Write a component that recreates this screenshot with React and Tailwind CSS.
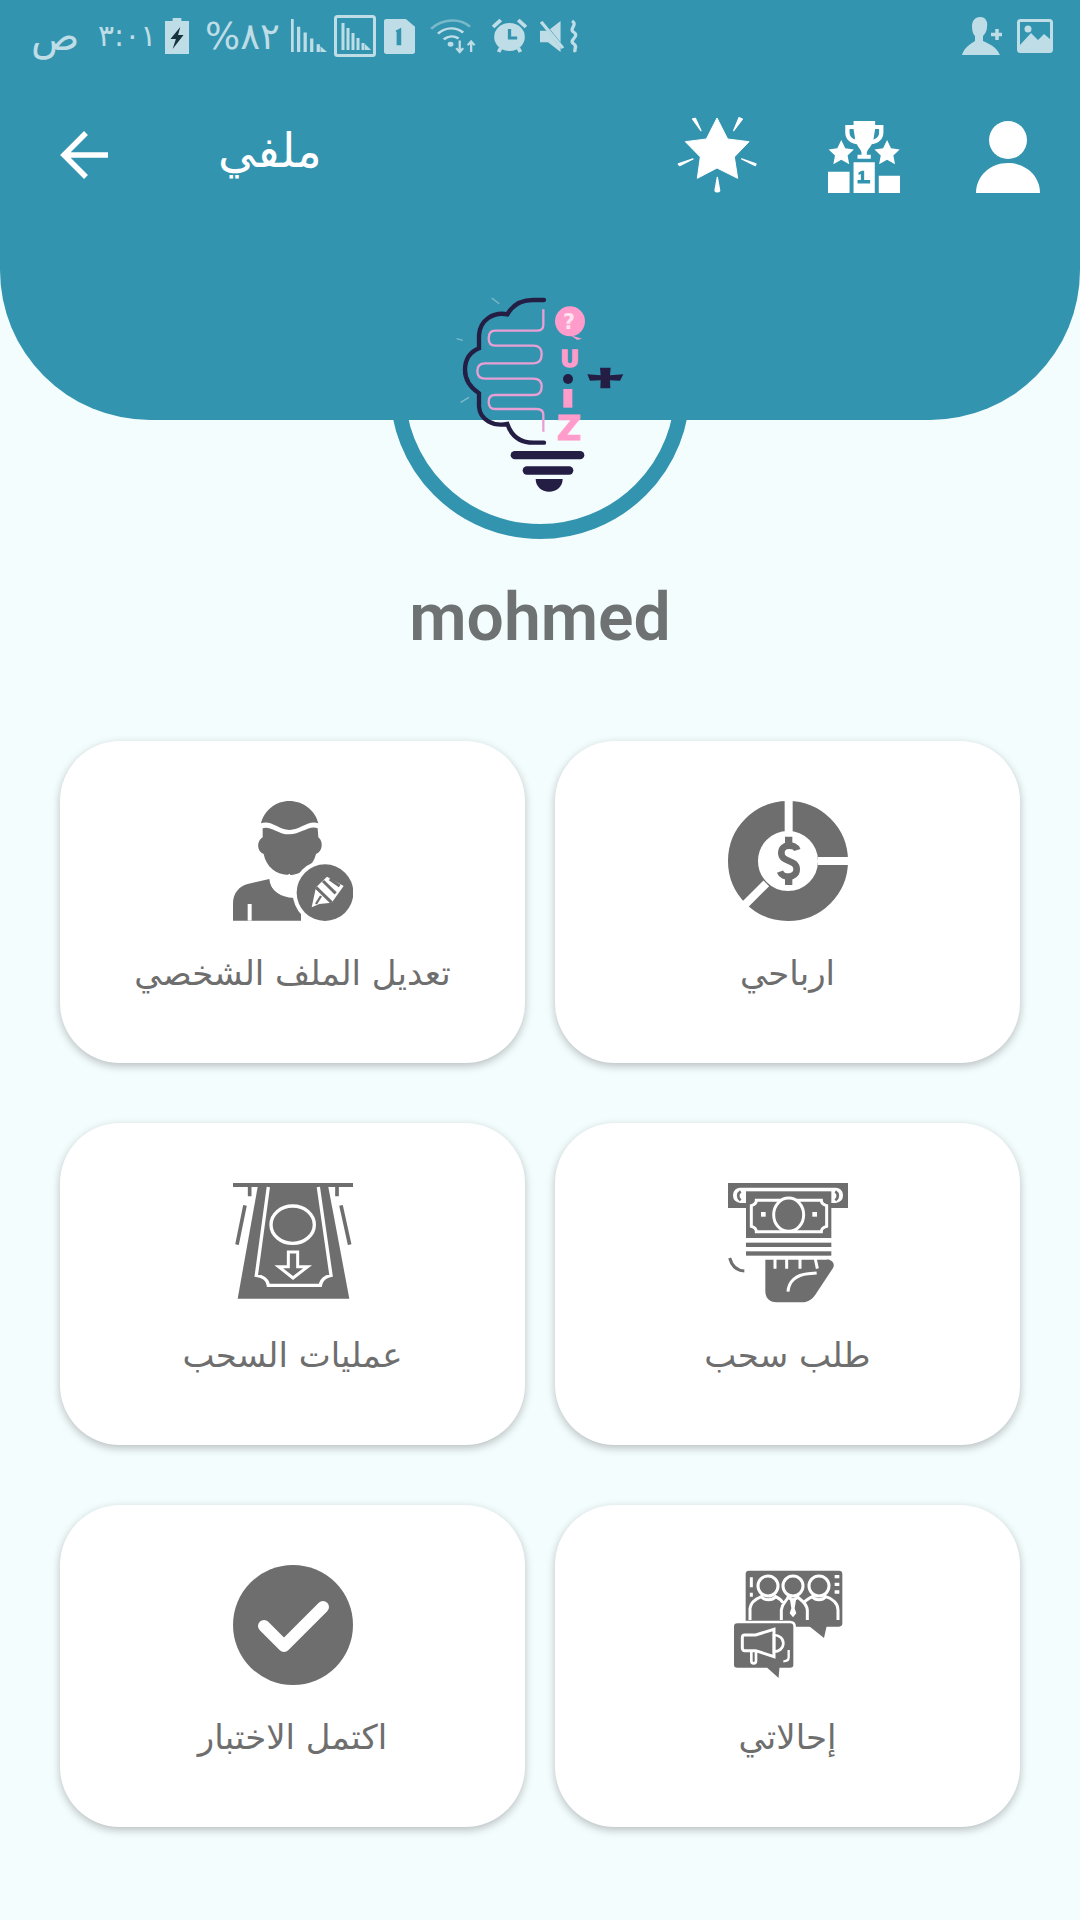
import React from 'react';

const GRAY = '#6e6e6e';

const EarningsIcon = () => (
    <svg width="120" height="120" viewBox="80 63 360 360">
        <circle cx="260" cy="243" r="135" fill="none" stroke={GRAY} strokeWidth="90" />
        <path d="M262 50V160M350 243H450M195 310L125 380" stroke="#fff" strokeWidth="24" />
        <path d="M288 210C282 192 240 190 240 218C240 250 286 236 286 268C286 296 244 296 236 275" fill="none" stroke={GRAY} strokeWidth="20" />
        <path d="M262 170V200M262 285V315" stroke={GRAY} strokeWidth="22" />
    </svg>
);

const EditProfileIcon = () => (
    <svg width="120" height="120" viewBox="96 63 360 360">
        <path d="M180 130C190 90 225 63 265 63C305 63 343 90 352 130C325 118 300 148 265 150C232 148 208 118 180 130Z" fill={GRAY} />
        <path d="M185 145C205 135 235 165 265 163C300 163 325 135 350 145L352 172C368 185 365 215 345 222C335 265 295 285 265 285C225 285 195 260 188 222C168 215 165 185 185 172Z" fill={GRAY} />
        <path d="M96 422V370C96 340 115 318 140 312L205 297C208 330 235 352 285 350L330 422Z" fill={GRAY} />
        <path d="M222 285C225 300 245 298 268 285M212 300C212 325 235 348 280 350" fill="none" stroke="#fff" strokeWidth="8" />
        <path d="M146 422V372" stroke="#fff" strokeWidth="12" />
        <rect x="300" y="400" width="40" height="30" fill="#fff" />
        <circle cx="372" cy="338" r="97" fill="#fff" />
        <circle cx="372" cy="338" r="85" fill={GRAY} />
        <path d="M345 322L378 290L428 318L392 368L355 372L332 382Z" fill="#fff" />
        <path d="M345 322L392 368M366 303L404 340M386 297L416 318" fill="none" stroke={GRAY} strokeWidth="9" />
        <path d="M345 372L360 348" fill="none" stroke={GRAY} strokeWidth="7" />
    </svg>
);

const RequestIcon = () => (
    <svg width="120" height="120" viewBox="50 40 360 360">
        <rect x="50" y="40" width="360" height="75" fill={GRAY} />
        <rect x="65" y="54" width="330" height="46" rx="22" fill="#fff" />
        <path d="M88 65C78 72 78 84 88 92M372 65C382 72 382 84 372 92" fill="none" stroke={GRAY} strokeWidth="8" />
        <rect x="104" y="65" width="256" height="140" fill={GRAY} />
        <path d="M135 92H330C330 100 338 106 346 108V170C338 172 330 178 330 186H135C135 178 127 172 120 170V108C127 106 135 100 135 92Z" fill="none" stroke="#fff" strokeWidth="9" />
        <ellipse cx="232" cy="135" rx="45" ry="50" fill={GRAY} stroke="#fff" strokeWidth="9" />
        <rect x="149" y="127" width="14" height="14" fill="#fff" />
        <rect x="303" y="127" width="14" height="14" fill="#fff" />
        <rect x="104" y="219" width="256" height="13" fill={GRAY} />
        <rect x="104" y="245" width="256" height="13" fill={GRAY} />
        <path d="M162 270H345C360 268 373 282 365 295L312 375C298 395 285 398 265 398H195C175 398 162 385 162 365Z" fill={GRAY} />
        <path d="M191 268V297M226 268V297M266 268V297M312 268L318 297" stroke="#fff" strokeWidth="9" />
        <path d="M230 366C232 335 255 315 290 312L316 310" fill="none" stroke="#fff" strokeWidth="9" />
        <path d="M55 265C62 290 75 303 99 304" fill="none" stroke={GRAY} strokeWidth="9" />
    </svg>
);

const WithdrawalsIcon = () => (
    <svg width="120" height="120" viewBox="66 45 360 360">
        <rect x="66" y="45" width="360" height="12" fill={GRAY} />
        <path d="M140 57H352L415 392H80Z" fill={GRAY} />
        <path d="M172 57L136 322C155 324 170 335 172 352H328C330 335 345 324 360 322L322 57" fill="none" stroke="#fff" strokeWidth="10" />
        <ellipse cx="245" cy="170" rx="65" ry="56" fill="none" stroke="#fff" strokeWidth="10" />
        <path d="M232 252H260V296H290L246 330L203 296H232Z" fill="none" stroke="#fff" strokeWidth="9" />
        <path d="M116 57V85M378 57V85M102 112L78 230M390 112L416 230" stroke={GRAY} strokeWidth="11" />
    </svg>
);

const ReferralsIcon = () => (
    <svg width="120" height="120" viewBox="52 45 360 360">
        <rect x="105" y="62" width="290" height="168" rx="10" fill={GRAY} />
        <path d="M295 228H348L340 264Z" fill={GRAY} />
        <path d="M122 82V112M122 128V140" stroke="#fff" strokeWidth="9" />
        <path d="M372 80H386M372 103H386M372 126H386" stroke="#fff" strokeWidth="10" />
        <circle cx="172" cy="108" r="30" fill="none" stroke="#fff" strokeWidth="9" />
        <circle cx="247" cy="108" r="30" fill="none" stroke="#fff" strokeWidth="9" />
        <circle cx="325" cy="108" r="30" fill="none" stroke="#fff" strokeWidth="9" />
        <path d="M118 210V175C120 155 140 145 152 140C160 152 185 152 195 140C205 145 212 150 216 158M212 210V180C215 158 230 150 232 142L247 150L262 142C270 150 288 158 290 180V210M280 158C285 150 295 145 305 140C315 152 335 152 345 140C365 145 382 160 382 180V210" fill="none" stroke="#fff" strokeWidth="9" />
        <path d="M238 150L256 150L252 175L257 190L247 202L237 190L242 175Z" fill="#fff" />
        <path d="M80 216H238C247 216 252 222 252 230V345C252 352 247 357 238 357H210L207 392L168 357H80C72 357 66 352 66 345V230C66 222 72 216 80 216Z" fill={GRAY} stroke="#fff" strokeWidth="8" />
        <path d="M95 262C95 258 98 255 102 255H135L190 238V320L135 302H102C98 302 95 298 95 295Z" fill={GRAY} stroke="#fff" strokeWidth="9" />
        <path d="M190 255V305C205 305 218 295 218 280C218 265 205 255 190 255Z" fill="none" stroke="#fff" strokeWidth="8" />
        <path d="M122 302V332C122 343 136 343 136 332V304" fill="none" stroke="#fff" strokeWidth="8" />
        <path d="M234 300V322C234 330 228 334 218 334" fill="none" stroke="#fff" strokeWidth="7" />
    </svg>
);

const CompletedIcon = () => (
    <svg width="120" height="120" viewBox="0 0 120 120">
        <circle cx="60" cy="60" r="60" fill={GRAY} />
        <path d="M31 61L51 81L90 42" fill="none" stroke="#fff" strokeWidth="12" strokeLinecap="round" strokeLinejoin="round" />
    </svg>
);

const cards = [
    { label: 'تعديل الملف الشخصي', Icon: EditProfileIcon },
    { label: 'ارباحي', Icon: EarningsIcon },
    { label: 'عمليات السحب', Icon: WithdrawalsIcon },
    { label: 'طلب سحب', Icon: RequestIcon },
    { label: 'اكتمل الاختبار', Icon: CompletedIcon },
    { label: 'إحالاتي', Icon: ReferralsIcon },
];

const StatusBar = () => (
    <div className="flex h-[75px] items-center justify-between pl-[31px] pr-[27px] pb-[3px] text-[#bedde6]">
        <div className="flex items-center">
            <span className="w-[46px] whitespace-nowrap text-[40px] font-extralight leading-none">ص</span>
            <span className="ml-[21px] w-[53px] whitespace-nowrap text-[30px] leading-none">٣:٠١</span>
            <svg className="ml-[14px]" width="24" height="36" viewBox="0 0 22 36" preserveAspectRatio="none">
                <path d="M7 0H15V3H22V36H0V3H7Z" fill="currentColor" />
                <path d="M14 9L5 21H10L7 31L17 17H12Z" fill="#16323d" />
            </svg>
            <span className="ml-[16px] w-[71px] whitespace-nowrap text-[37px] leading-none">%٨٢</span>
            <svg className="ml-[15px]" width="36" height="35" viewBox="0 0 33 36" preserveAspectRatio="none">
                <path d="M1 0V34M7 8V34M13 14V34M19 20V34M25 26V34" stroke="currentColor" strokeWidth="3" />
                <path d="M27 34L33 34L27 28Z" fill="currentColor" />
            </svg>
            <svg className="ml-[7px]" width="42" height="42" viewBox="0 0 42 42">
                <rect x="1.5" y="1.5" width="39" height="39" rx="2" fill="none" stroke="currentColor" strokeWidth="3" />
                <path d="M9 8V35M14 13V35M19 18V35M24 23V35M29 28V35" stroke="currentColor" strokeWidth="3" />
                <path d="M31 35H37L31 29Z" fill="currentColor" />
            </svg>
            <svg className="ml-[8px]" width="31" height="35" viewBox="0 0 27 36" preserveAspectRatio="none">
                <path d="M2 0H19L27 8V34C27 35 26 36 25 36H2C1 36 0 35 0 34V2C0 1 1 0 2 0Z" fill="currentColor" />
                <path d="M10 12L15 9V27H11V14Z" fill="#3394af" />
            </svg>
            <svg className="ml-[15px]" width="48" height="35" viewBox="0 0 42 36" preserveAspectRatio="none">
                <path d="M1 10C11 -1 27 -1 35 8" fill="none" stroke="currentColor" strokeWidth="2.5" opacity="0.5" />
                <path d="M7 15C14 8 23 8 29 14M12 21C16 17 21 17 25 20" fill="none" stroke="currentColor" strokeWidth="2.5" />
                <circle cx="18" cy="26" r="2.5" fill="currentColor" />
                <path d="M26 22V34M23 30L26 34L29 30M36 34V24M33 27L36 23L39 27" fill="none" stroke="currentColor" strokeWidth="2" />
            </svg>
            <svg className="ml-[14px]" width="35" height="36" viewBox="0 0 32 36" preserveAspectRatio="none">
                <circle cx="16" cy="19" r="14" fill="currentColor" />
                <path d="M1 9L8 2M31 9L24 2M6 34L8 30M26 34L24 30" stroke="currentColor" strokeWidth="3.5" />
                <path d="M16 11V20H23" fill="none" stroke="#3394af" strokeWidth="3" />
            </svg>
            <svg className="ml-[13px]" width="40" height="35" viewBox="0 0 35 36" preserveAspectRatio="none">
                <path d="M0 12H7L18 2V34L7 24H0Z" fill="currentColor" />
                <path d="M3 5L21 31" stroke="#3394af" strokeWidth="3" />
                <path d="M1 3L20 30" stroke="currentColor" strokeWidth="3" />
                <path d="M28 2C34 6 24 10 30 14C35 18 24 22 30 26C33 29 29 31 31 34" fill="none" stroke="currentColor" strokeWidth="3" />
            </svg>
        </div>
        <div className="flex items-center gap-[15px]">
            <svg width="40" height="38" viewBox="0 0 40 38">
                <path d="M18 0C24 0 26 5 25 10C25 14 23 17 21 19V24C27 27 34 29 38 38H0C2 31 8 27 13 24V19C11 17 10 14 10 9C10 4 13 0 18 0Z" fill="currentColor" />
                <path d="M35 12V23M29 17.5H40" stroke="currentColor" strokeWidth="3.5" />
            </svg>
            <svg width="36" height="34" viewBox="0 0 36 34">
                <rect x="1.5" y="1.5" width="33" height="31" rx="2" fill="none" stroke="currentColor" strokeWidth="3" />
                <path d="M3 26L14 14L21 21L27 15L33 20V32H3Z" fill="currentColor" />
                <circle cx="11" cy="10" r="3.5" fill="currentColor" />
            </svg>
        </div>
    </div>
);

const Toolbar = () => (
    <div className="mt-[42px] flex items-center pl-[60px] pr-[40px]">
        <svg width="48" height="48" viewBox="0 0 48 48">
            <path d="M26 2L4 24L26 46M4 24H48" fill="none" stroke="#fff" strokeWidth="5.5" />
        </svg>
        <h1 className="mb-[10px] ml-[110px] text-[47px] font-normal leading-none text-white">ملفي</h1>
        <div className="ml-auto flex items-end">
            <svg width="80" height="76" viewBox="110 354 240 228">
                <path d="M230 357L262 420L326 428L282 474L292 538L230 507L171 538L180 474L135 428L198 420Z" fill="#fff" stroke="#fff" strokeWidth="3" strokeLinejoin="round" />
                <path d="M157 360L182 395L165 358ZM306 360L280 395L296 356ZM114 495L158 480L118 500ZM347 495L304 480L345 500ZM231 535L224 575C226 580 236 580 238 575Z" fill="#fff" stroke="#fff" strokeWidth="4" strokeLinejoin="round" />
            </svg>
            <svg className="ml-[71px]" width="72" height="72" viewBox="563 360 217 217">
                <path d="M640 360H705V372H730V395C730 415 715 428 695 430C690 440 682 445 680 455V462H692V474H652V462H664V455C662 445 654 440 650 430C630 428 615 415 615 395V372H640ZM628 384V395C628 405 635 414 645 416L640 384ZM717 384H705L700 416C710 414 717 405 717 395Z" fill="#fff" />
                <path d="M603 417L615 442L641 446L622 464L627 490L603 477L579 490L584 464L565 446L591 442ZM741 417L753 442L779 446L760 464L765 490L741 477L717 490L722 464L703 446L729 442Z" fill="#fff" />
                <path d="M563 513H628V577H563ZM716 525H780V577H716Z" fill="#fff" />
                <path fillRule="evenodd" d="M640 484H704V577H640ZM655 515L665 510H672V538H690V548H652V538H662V520L655 523Z" fill="#fff" />
            </svg>
            <svg className="ml-[76px]" width="64" height="72" viewBox="0 0 64 72">
                <circle cx="32" cy="19" r="19" fill="#fff" />
                <path d="M0 72C0 55 14 42 32 42C50 42 64 55 64 72Z" fill="#fff" />
            </svg>
        </div>
    </div>
);

const Logo = () => (
    <svg className="absolute left-[-35px] top-[16px] z-20" width="340" height="280" viewBox="0 0 1020 840">
        <path d="M522 90H490C450 90 425 110 412 133C370 125 330 150 327 195V235C290 250 285 280 285 300C285 330 305 355 327 370V410C330 450 370 470 412 462C425 500 450 518 490 518H522" fill="none" stroke="#241e45" strokeWidth="13" strokeLinecap="round" />
        <path d="M520 118V165Q520 182 500 182H375Q356 182 356 205Q356 227 375 227H490Q515 227 515 252Q515 280 490 280H345Q322 280 322 303Q322 326 345 326H490Q515 326 515 350Q515 375 490 375H375Q356 375 356 395Q356 417 375 417H500Q520 417 520 435V485" fill="none" stroke="#e8a0d4" strokeWidth="7" />
        <path d="M365 84L388 101M260 206L278 211M272 397L297 382" stroke="#7fb9cb" strokeWidth="4" />
        <circle cx="600" cy="154" r="45" fill="#ff9ccb" />
        <path d="M600 195L636 206L622 210Z" fill="#ff9ccb" />
        <text x="597" y="176" textAnchor="middle" fontSize="62" fontWeight="700" fill="#ffe3f0" fontFamily="DejaVu Sans, sans-serif">?</text>
        <text x="599" y="290" textAnchor="middle" fontSize="70" fontWeight="700" fill="#ff9ccb" stroke="#ff9ccb" strokeWidth="4" fontFamily="DejaVu Sans, sans-serif">U</text>
        <circle cx="594" cy="327" r="15" fill="#241e45" />
        <rect x="580" y="357" width="27" height="56" fill="#ff9ccb" />
        <text x="597" y="511" textAnchor="middle" fontSize="102" fontWeight="700" fill="#ff9ccb" stroke="#ff9ccb" strokeWidth="3" fontFamily="DejaVu Sans, sans-serif">Z</text>
        <path d="M652 313L692 316L690 293H722L720 316L760 313L750 332L720 331L721 355H691L692 331L660 332Z" fill="#241e45" />
        <rect x="422" y="543" width="221" height="25" rx="12.5" fill="#241e45" />
        <rect x="458" y="589" width="152" height="25" rx="12.5" fill="#241e45" />
        <path d="M497 627H578C578 650 560 665 537 665C515 665 497 650 497 627Z" fill="#241e45" />
    </svg>
);

const App = () => {
    return (
        <div
            className="min-h-[1920px] w-full bg-[#f4fdfe]"
            style={{ fontFamily: '"DejaVu Sans", "Noto Sans", sans-serif' }}
        >
            <header className="relative z-10 h-[420px] rounded-b-[150px] bg-[#3394af]">
                <StatusBar />
                <Toolbar />
            </header>

            <div className="relative mx-auto mt-[-181px] h-[300px] w-[300px] rounded-full border-[15px] border-[#3394af]">
                <Logo />
            </div>

            <h2 className="mt-[44px] text-center text-[66px] font-semibold leading-[70px] text-[#6e7272] [font-family:Roboto,sans-serif]">
                mohmed
            </h2>

            <div className="mt-[88px] grid grid-cols-2 gap-x-[30px] gap-y-[60px] px-[60px]">
                {cards.map(({ label, Icon }) => (
                    <div
                        key={label}
                        className="flex h-[322px] flex-col items-center rounded-[60px] bg-white pt-[60px] shadow-[0_3px_8px_rgba(0,0,0,0.25)]"
                    >
                        <Icon />
                        <span className="mt-[27px] text-[34px] leading-[50px] text-[#6e6e6e]">{label}</span>
                    </div>
                ))}
            </div>
        </div>
    );
};

export default App;
